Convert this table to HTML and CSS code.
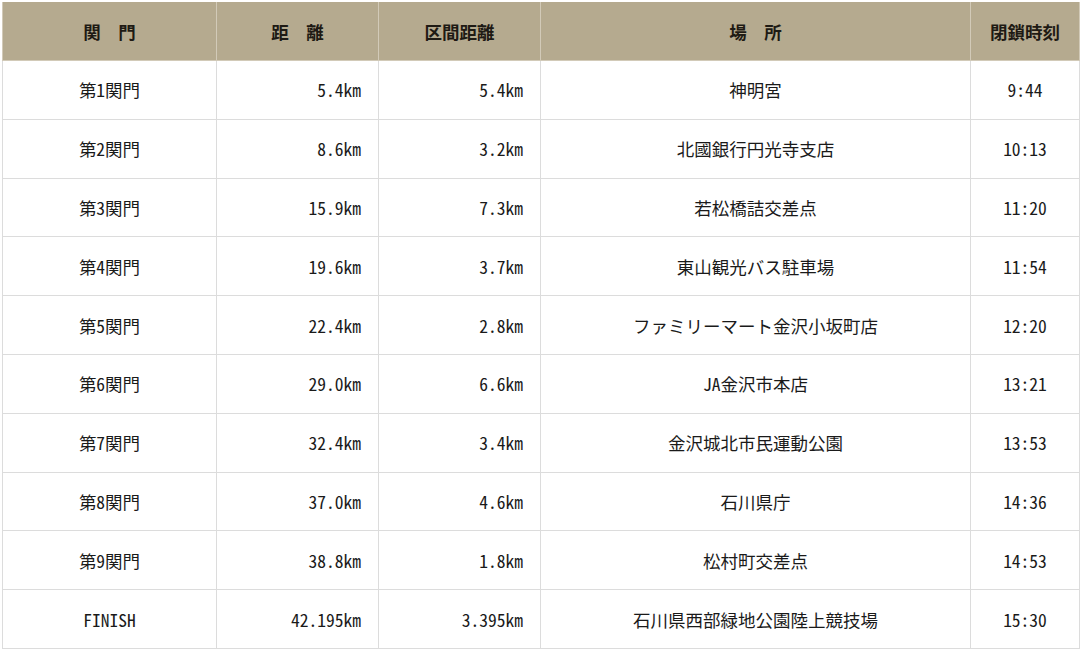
FILE: index.html
```html
<!DOCTYPE html>
<html lang="ja">
<head>
<meta charset="utf-8">
<link rel="stylesheet" href="styles.css">
</head>
<body>
<table class="gates">
  <colgroup>
    <col class="c1"><col class="c2"><col class="c3"><col class="c4"><col class="c5">
  </colgroup>
  <thead>
    <tr><th>関　門</th><th>距　離</th><th>区間距離</th><th>場　所</th><th>閉鎖時刻</th></tr>
  </thead>
  <tbody>
    <tr><td>第1関門</td><td class="num">5.4km</td><td class="num">5.4km</td><td>神明宮</td><td>9:44</td></tr>
    <tr><td>第2関門</td><td class="num">8.6km</td><td class="num">3.2km</td><td>北國銀行円光寺支店</td><td>10:13</td></tr>
    <tr><td>第3関門</td><td class="num">15.9km</td><td class="num">7.3km</td><td>若松橋詰交差点</td><td>11:20</td></tr>
    <tr><td>第4関門</td><td class="num">19.6km</td><td class="num">3.7km</td><td>東山観光バス駐車場</td><td>11:54</td></tr>
    <tr><td>第5関門</td><td class="num">22.4km</td><td class="num">2.8km</td><td>ファミリーマート金沢小坂町店</td><td>12:20</td></tr>
    <tr><td>第6関門</td><td class="num">29.0km</td><td class="num">6.6km</td><td>JA金沢市本店</td><td>13:21</td></tr>
    <tr><td>第7関門</td><td class="num">32.4km</td><td class="num">3.4km</td><td>金沢城北市民運動公園</td><td>13:53</td></tr>
    <tr><td>第8関門</td><td class="num">37.0km</td><td class="num">4.6km</td><td>石川県庁</td><td>14:36</td></tr>
    <tr><td>第9関門</td><td class="num">38.8km</td><td class="num">1.8km</td><td>松村町交差点</td><td>14:53</td></tr>
    <tr><td>FINISH</td><td class="num">42.195km</td><td class="num">3.395km</td><td>石川県西部緑地公園陸上競技場</td><td>15:30</td></tr>
  </tbody>
</table>
</body>
</html>
```

FILE: styles.css
```css
html, body {
  margin: 0;
  padding: 0;
  background: #ffffff;
}
body {
  padding: 2px 1px 0 2px;
  font-family: "Noto Sans Mono CJK JP", "Noto Sans CJK JP", monospace;
  color: #1a1a1a;
}
.gates {
  border-collapse: collapse;
  table-layout: fixed;
  width: 1077px;
}
.c1 { width: 214px; }
.c2 { width: 162px; }
.c3 { width: 162px; }
.c4 { width: 430px; }
.c5 { width: 109px; }
.gates th {
  background: #b5aa8f;
  color: #1e1a14;
  font-weight: bold;
  font-size: 17.5px;
  height: 58px;
  padding: 0;
  text-align: center;
  border: 1px solid #d2cab8;
  border-top: none;
}
.gates td {
  height: 57.8px;
  padding: 0;
  font-size: 17.5px;
  text-align: center;
  border: 1px solid #dcdcdc;
}
.gates td.num {
  text-align: right;
  padding-right: 17px;
}
```
